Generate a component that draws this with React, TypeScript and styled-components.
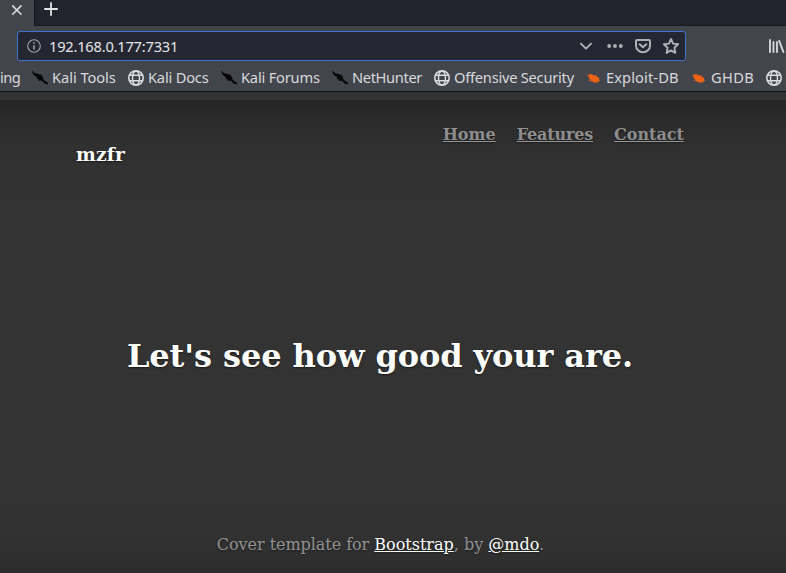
import React from 'react';
import styled, { createGlobalStyle } from 'styled-components';

const GlobalStyle = createGlobalStyle`
  *, *::before, *::after { box-sizing: border-box; }
  html, body { margin: 0; height: 573px; overflow: hidden; background: #333; }
  #root { height: 573px; }
`;

const Window = styled.div`
  width: 786px;
  height: 573px;
  overflow: hidden;
  display: flex;
  flex-direction: column;
  background: #333;
  font-family: 'Noto Sans', sans-serif;
  color: #d9d9dc;
`;

const TabStrip = styled.div`
  height: 26px;
  flex: none;
  display: flex;
  background: #22242d;
`;

const Tab = styled.div`
  width: 34px;
  height: 26px;
  padding: 4px 0 0 11px;
  background: #43454c;
`;

const NewTab = styled.div`
  flex: 1;
  height: 26px;
  padding: 2px 0 0 9px;
  border-left: 1px solid #15161c;
  border-bottom: 1px solid #15161c;
`;

const Toolbar = styled.div`
  height: 38px;
  flex: none;
  display: flex;
  align-items: flex-start;
  padding: 5px 0 0 17px;
  background: #43454c;
`;

const AddressBar = styled.div`
  width: 669px;
  height: 30px;
  display: flex;
  align-items: center;
  padding: 0 6px 0 9px;
  border: 1px solid #3a74d0;
  border-radius: 3px;
  background: #242731;
`;

const Address = styled.span`
  flex: 1;
  margin: 0 0 1px 8px;
  font-size: 14.67px;
  line-height: 20px;
  letter-spacing: -0.22px;
  color: #e6e6e8;
`;

const Actions = styled.div`
  display: flex;
  align-items: center;
  gap: 12px;
  color: #b0b1b6;
`;

const Library = styled.div`
  margin: 7px 0 0 82px;
`;

const Bookmarks = styled.div`
  height: 28px;
  flex: none;
  display: flex;
  align-items: flex-start;
  padding-top: 3px;
  background: #43454c;
  border-bottom: 1px solid #0f1013;
`;

const Icon = styled.svg`
  display: block;
  flex: none;
  overflow: visible;
`;

const Bookmark = styled.div<{ $width: number; $spacing?: number }>`
  width: ${(p) => p.$width}px;
  height: 20px;
  flex: none;
  display: flex;
  align-items: center;
  gap: 4px;
  font-size: 14.67px;
  line-height: 20px;
  letter-spacing: ${(p) => p.$spacing ?? -0.2}px;
  white-space: nowrap;

  ${Icon} {
    margin-top: 2px;
  }
`;

const Viewport = styled.div`
  height: 481px;
  flex: none;
  padding-top: 8px;
  overflow: hidden;
`;

const Page = styled.div`
  height: 500px;
  margin: 0 -100px;
  padding: 0 100px;
  display: flex;
  flex-direction: column;
  background: #333;
  box-shadow: inset 0 0 80px rgba(0, 0, 0, 0.5);
  font-family: 'DejaVu Serif', serif;
  font-size: 16px;
  color: #fff;
  text-shadow: 0 1px 2px rgba(0, 0, 0, 0.5);
`;

const Masthead = styled.header`
  height: 237px;
  flex: none;
  display: flex;
  justify-content: space-between;
  padding: 25px 102px 0 76px;
`;

const Brand = styled.h3`
  margin: 18px 0 0;
  font-size: 18.72px;
  line-height: 22px;
  letter-spacing: 0.15px;
`;

const Nav = styled.nav`
  display: flex;
  gap: 21px;
`;

const NavLink = styled.a<{ $spacing?: number }>`
  height: 20px;
  font-weight: 700;
  line-height: 20px;
  letter-spacing: ${(p) => p.$spacing ?? 0}px;
  color: rgba(255, 255, 255, 0.5);
  text-decoration: underline;
`;

const Heading = styled.h1`
  width: 760px;
  margin: 0;
  font-size: 32px;
  line-height: 39px;
  letter-spacing: -0.09px;
  text-align: center;
  white-space: nowrap;
`;

const Credit = styled.p`
  width: 761px;
  margin: 159px 0 0;
  line-height: 19px;
  text-align: center;
  color: rgba(255, 255, 255, 0.5);
`;

const CreditText = styled.span`
  letter-spacing: -0.05px;
`;

const CreditLink = styled.a`
  color: #fff;
  text-decoration: underline;
`;

const Globe = () => (
  <Icon width="16" height="16" viewBox="0 0 16 16" fill="none" stroke="#dddde0" strokeWidth="1.4">
    <circle cx="8" cy="8" r="7.2" strokeWidth="1.6" />
    <ellipse cx="8" cy="8" rx="3.5" ry="7" />
    <path d="M1.8 5.3h12.4M1.8 10.7h12.4" />
  </Icon>
);

const Dragon = () => (
  <Icon width="16" height="16" viewBox="0 0 16 16" fill="#050505">
    <path d="M0 .2 2 2.6l2.8 1.4 1-.8.9 1.4 2.8-.2.3 1.9 1.7.6-.7 1.3 1.6 2.4 3.4 2.2.2 1.8-3.4-1.2-2.2-2.4-2.1-.4-1.6.3.1-1.7-2.1-.3.4-1.6L3.2 6 1 4.1Z" />
  </Icon>
);

const Bug = () => (
  <Icon width="16" height="16" viewBox="0 0 16 16" fill="#ed6215">
    <path d="M1.7 6C2.2 4.1 5 3.6 7 5l2.6.4 1.6 1.7 2.2 1-.4 1.2.9 1.7-1.6.2-.6 1.4-2.2-.2-2.3.2-.8-1.3-2 .1.3-1.9-2.1-.5.8-1.3Z" />
    <path d="m.8 5 3 .8M5 3.4l1 2.2M10 5.6l2 .2M2 10.6l3-.4M11 11l1.6 1.8" fill="none" stroke="#ed6215" strokeWidth=".8" opacity=".5" />
  </Icon>
);

export default function App() {
  return (
    <>
      <GlobalStyle />
      <Window>
        <TabStrip>
          <Tab>
            <Icon width="12" height="12" viewBox="0 0 12 12" stroke="#dcdcdf" strokeWidth="1.6" strokeLinecap="round">
              <path d="m1.7 1.9 8.3 8.3M10 1.9 1.7 10.2" />
            </Icon>
          </Tab>
          <NewTab>
            <Icon width="14" height="14" viewBox="0 0 14 14" stroke="#e4e4e6" strokeWidth="1.8" strokeLinecap="round">
              <path d="M7 .9v12.2M.9 7h12.2" />
            </Icon>
          </NewTab>
        </TabStrip>
        <Toolbar>
          <AddressBar>
            <Icon width="14" height="14" viewBox="0 0 14 14" fill="none" stroke="#a5a6ab">
              <circle cx="7" cy="7" r="6.3" strokeWidth="1.1" />
              <path d="M7 6.2v4.3M7 3.3v1.5" strokeWidth="1.5" />
            </Icon>
            <Address>192.168.0.177:7331</Address>
            <Actions>
              <Icon width="16" height="16" viewBox="0 0 16 16" fill="none" stroke="currentColor" strokeWidth="1.9" strokeLinecap="round" strokeLinejoin="round">
                <path d="m1.9 5.6 5.1 5.1 5.1-5.1" />
              </Icon>
              <Icon width="16" height="16" viewBox="0 0 16 16" fill="currentColor">
                <circle cx="2.2" cy="8" r="1.9" />
                <circle cx="8" cy="8" r="1.9" />
                <circle cx="13.8" cy="8" r="1.9" />
              </Icon>
              <Icon width="16" height="16" viewBox="0 0 16 16" fill="none" stroke="currentColor" strokeWidth="2" strokeLinecap="round" strokeLinejoin="round">
                <path d="M2 2h12q1 0 1 1v4.4a7 6.8 0 0 1-14 0V3q0-1 1-1Z" />
                <path d="M4.7 6.2 8 9.3 11.3 6.2" />
              </Icon>
              <Icon width="16" height="16" viewBox="0 0 16 16" fill="none" stroke="currentColor" strokeWidth="1.9" strokeLinejoin="round">
                <path d="m8 1 2.1 4.6 5 .6-3.7 3.5 1 5.2L8 12.4l-4.4 2.5 1-5.2L.9 6.2l5-.6Z" />
              </Icon>
            </Actions>
          </AddressBar>
          <Library>
            <Icon width="16" height="16" viewBox="0 0 16 16" fill="none" stroke="#d6d6d9" strokeWidth="1.9" strokeLinecap="round">
              <path d="M2 2v12M5.5 4v10M9 4v10M11.2 2.8l4.2 11.2" />
            </Icon>
          </Library>
        </Toolbar>
        <Bookmarks>
          <Bookmark $width={32} $spacing={-0.5}>ing</Bookmark>
          <Bookmark $width={96} $spacing={-0.05}><Dragon />Kali Tools</Bookmark>
          <Bookmark $width={93}><Globe />Kali Docs</Bookmark>
          <Bookmark $width={111}><Dragon />Kali Forums</Bookmark>
          <Bookmark $width={102} $spacing={-0.36}><Dragon />NetHunter</Bookmark>
          <Bookmark $width={152} $spacing={-0.24}><Globe />Offensive Security</Bookmark>
          <Bookmark $width={105} $spacing={0.1}><Bug />Exploit-DB</Bookmark>
          <Bookmark $width={75} $spacing={0.3}><Bug />GHDB</Bookmark>
          <Bookmark $width={20}><Globe /></Bookmark>
        </Bookmarks>
        <Viewport>
          <Page>
            <Masthead>
              <Brand>mzfr</Brand>
              <Nav>
                <NavLink>Home</NavLink>
                <NavLink $spacing={-0.16}>Features</NavLink>
                <NavLink>Contact</NavLink>
              </Nav>
            </Masthead>
            <Heading>Let's see how good your are.</Heading>
            <Credit>
              <CreditText>Cover template for </CreditText>
              <CreditLink>Bootstrap</CreditLink>, by <CreditLink>@mdo</CreditLink>.
            </Credit>
          </Page>
        </Viewport>
      </Window>
    </>
  );
}
